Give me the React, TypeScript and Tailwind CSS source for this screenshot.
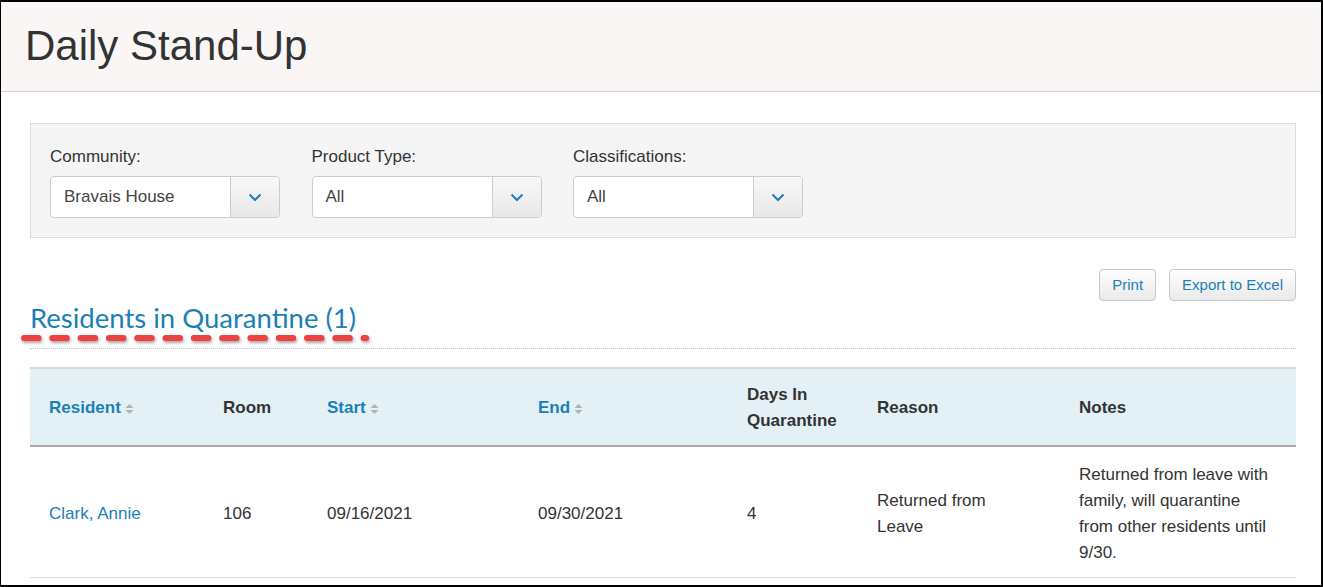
import React from 'react';

const sans = { fontFamily: '"Liberation Sans", Arial, sans-serif' };

function Chevron() {
  return (
    <svg width="14" height="9" viewBox="0 0 14 9" fill="none">
      <polyline points="1.5,1.5 7,7 12.5,1.5" stroke="#1b80b6" strokeWidth="2" />
    </svg>
  );
}

function SortIcon() {
  return (
    <svg width="9" height="12" viewBox="0 0 9 12" className="ml-[4px] inline-block align-middle">
      <polygon points="4.5,1 8.5,5 0.5,5" fill="#b0b0b0" />
      <polygon points="0.5,7 8.5,7 4.5,11" fill="#b0b0b0" />
    </svg>
  );
}

function Select({ label, value }: { label: string; value: string }) {
  return (
    <div className="w-[230px]">
      <div className="text-[17px] leading-[24px] text-[#333]">{label}</div>
      <div className="mt-[7px] flex h-[42px] rounded-[4px] border border-[#cccccc] bg-white">
        <div className="flex flex-1 items-center pl-[13px] text-[17px] text-[#444]">{value}</div>
        <div className="flex w-[49px] items-center justify-center rounded-r-[4px] border-l border-[#cccccc] bg-linear-to-b from-[#f8f8f8] to-[#e8e8e8]">
          <Chevron />
        </div>
      </div>
    </div>
  );
}

function Btn({ children }: { children: React.ReactNode }) {
  return (
    <button className="h-[32px] rounded-[4px] border border-[#c8c8c8] bg-linear-to-b from-[#ffffff] to-[#e9e9e9] px-[12px] text-[15px] text-[#1b80b6]">
      {children}
    </button>
  );
}

export default function App() {
  return (
    <div style={sans} className="h-[587px] w-[1323px] overflow-hidden border-t-2 border-r-2 border-b-2 border-l border-black bg-white text-[#333]">
      <div className="h-[90px] border-b border-[#d2d2d2] bg-[#f9f6f5] pl-[24px] pt-[23px]">
        <h1 className="text-[42px] leading-none text-[#333]">Daily Stand-Up</h1>
      </div>

      <div className="ml-[29px] w-[1266px]">
        <div className="mt-[31px] flex gap-[31.5px] border border-[#dcdcdc] bg-[#f5f5f5] pb-[19px] pl-[19px] pt-[21px]">
          <Select label="Community:" value="Bravais House" />
          <Select label="Product Type:" value="All" />
          <Select label="Classifications:" value="All" />
        </div>

        <div className="mt-[31px] flex justify-end gap-[13px]">
          <Btn>Print</Btn>
          <Btn>Export to Excel</Btn>
        </div>

        <div className="relative border-b border-dotted border-[#c4c4c4] pb-[13px]">
          <h2 style={{ fontFamily: 'Lato, "Open Sans", sans-serif' }} className="text-[27.5px] leading-[34px] text-[#1b80b6]">
            Residents in Quarantine (1)
          </h2>
          <svg width="360" height="14" className="absolute left-[-10px] top-[31px]" style={{ filter: 'drop-shadow(1px 2px 1.5px rgba(0,0,0,0.35))' }}>
            <line x1="4" y1="6" x2="346" y2="6" stroke="#f04141" strokeWidth="6" strokeLinecap="round" strokeDasharray="14.5 13.8" />
          </svg>
        </div>

        <table className="mt-[18px] w-full table-fixed border-collapse text-[17px]">
          <colgroup>
            <col className="w-[174px]" />
            <col className="w-[104px]" />
            <col className="w-[211px]" />
            <col className="w-[209px]" />
            <col className="w-[130px]" />
            <col className="w-[202px]" />
            <col />
          </colgroup>
          <thead>
            <tr className="border-t-2 border-b-2 border-t-[#d6d6d6] border-b-[#a9a9a9] bg-[#e3f1f6] text-left font-bold leading-[26px]">
              <th className="px-[19px] pt-[13px] pb-[11px] text-[#1b80b6]">Resident<SortIcon /></th>
              <th className="px-[19px] pt-[13px] pb-[11px]">Room</th>
              <th className="px-[19px] pt-[13px] pb-[11px] text-[#1b80b6]">Start<SortIcon /></th>
              <th className="px-[19px] pt-[13px] pb-[11px] text-[#1b80b6]">End<SortIcon /></th>
              <th className="px-[19px] pt-[13px] pb-[11px]">Days In Quarantine</th>
              <th className="px-[19px] pt-[13px] pb-[11px]">Reason</th>
              <th className="px-[19px] pt-[13px] pb-[11px]">Notes</th>
            </tr>
          </thead>
          <tbody>
            <tr className="border-b border-[#dddddd] leading-[26px]">
              <td className="px-[19px] pt-[15px] pb-[11px] text-[#1b80b6]">Clark, Annie</td>
              <td className="px-[19px] pt-[15px] pb-[11px]">106</td>
              <td className="px-[19px] pt-[15px] pb-[11px]">09/16/2021</td>
              <td className="px-[19px] pt-[15px] pb-[11px]">09/30/2021</td>
              <td className="px-[19px] pt-[15px] pb-[11px]">4</td>
              <td className="px-[19px] pt-[15px] pb-[11px]"><div className="max-w-[150px]">Returned from Leave</div></td>
              <td className="px-[19px] pt-[15px] pb-[11px]">Returned from leave with family, will quarantine from other residents until 9/30.</td>
            </tr>
          </tbody>
        </table>
      </div>
    </div>
  );
}
